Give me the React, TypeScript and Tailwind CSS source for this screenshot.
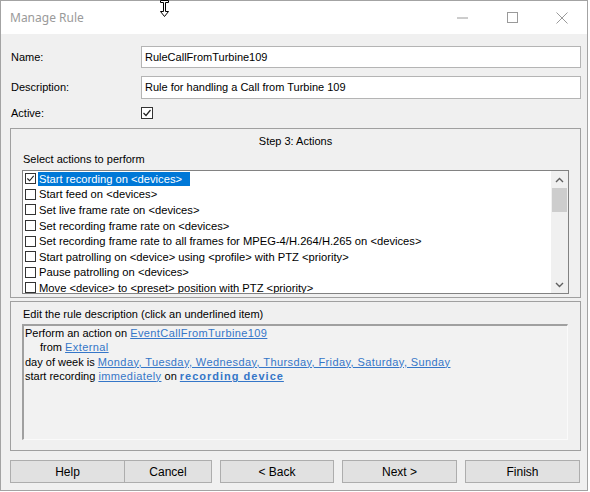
import React from "react";

const font = { fontFamily: '"Liberation Sans", Arial, sans-serif' };

const actions = [
  "Start recording on <devices>",
  "Start feed on <devices>",
  "Set live frame rate on <devices>",
  "Set recording frame rate on <devices>",
  "Set recording frame rate to all frames for MPEG-4/H.264/H.265 on <devices>",
  "Start patrolling on <device> using <profile> with PTZ <priority>",
  "Pause patrolling on <devices>",
  "Move <device> to <preset> position with PTZ <priority>",
];

function Check({ size = 11, checked = false }: { size?: number; checked?: boolean }) {
  return (
    <span
      className="flex shrink-0 items-center justify-center border border-[#333] bg-white"
      style={{ width: size, height: size }}
    >
      {checked && (
        <svg width={size - 2} height={size - 2} viewBox="0 0 10 10">
          <polyline points="1.5,5 4,7.5 8.5,2" fill="none" stroke="#222" strokeWidth="1.2" />
        </svg>
      )}
    </span>
  );
}

function Chevron({ up }: { up?: boolean }) {
  return (
    <svg width="9" height="6" viewBox="0 0 9 6">
      <polyline
        points={up ? "1,5 4.5,1.5 8,5" : "1,1 4.5,4.5 8,1"}
        fill="none"
        stroke="#606060"
        strokeWidth="1.4"
      />
    </svg>
  );
}

function Link({ children, bold }: { children: React.ReactNode; bold?: boolean }) {
  return (
    <span
      className={`text-[#3576c8] underline ${
        bold ? "font-bold tracking-[1px]" : "tracking-[0.4px]"
      }`}
    >
      {children}
    </span>
  );
}

function Button({ label, w, className = "" }: { label: string; w: string; className?: string }) {
  return (
    <button
      className={`h-[23px] ${w} border border-[#adadad] bg-[#e1e1e1] text-[12px] text-black ${className}`}
    >
      {label}
    </button>
  );
}

export default function App() {
  return (
    <div className="relative h-[492px] w-[590px] overflow-hidden bg-white" style={font}>
      <div className="flex h-[491px] w-[588px] flex-col border border-[#a3a3a3]">
        {/* title bar */}
        <div className="flex h-[33px] shrink-0 items-center bg-white">
          <span
            className="pl-[9px] text-[12px] text-[#9a9a9a]"
            style={{ fontFamily: '"Noto Sans", "Open Sans", sans-serif' }}
          >
            Manage Rule
          </span>
          <div className="ml-auto flex h-full">
            <div className="flex w-[50px] items-center justify-center">
              <svg width="11" height="2" viewBox="0 0 11 2">
                <line x1="0" y1="1" x2="11" y2="1" stroke="#9a9a9a" strokeWidth="1" />
              </svg>
            </div>
            <div className="flex w-[50px] items-center justify-center">
              <svg width="11" height="11" viewBox="0 0 11 11">
                <rect x="0.5" y="0.5" width="10" height="10" fill="none" stroke="#9a9a9a" />
              </svg>
            </div>
            <div className="flex w-[50px] items-center justify-center">
              <svg width="12" height="12" viewBox="0 0 12 12">
                <path d="M0.5 0.5 L11.5 11.5 M11.5 0.5 L0.5 11.5" stroke="#9a9a9a" strokeWidth="1" />
              </svg>
            </div>
          </div>
        </div>

        {/* body */}
        <div className="flex flex-1 flex-col bg-[#f0f0f0] pl-[9px] pr-[6px] text-[11px] text-black">
          <div className="mt-[12px] flex h-[22px] items-center">
            <span className="w-[131px] pl-px">Name:</span>
            <div className="flex h-full flex-1 items-center border border-[#b4b4b4] bg-white pl-[3px]">
              RuleCallFromTurbine109
            </div>
          </div>
          <div className="mt-[8px] flex h-[23px] items-center">
            <span className="w-[131px] pl-px">Description:</span>
            <div className="flex h-full flex-1 items-center border border-[#b4b4b4] bg-white pl-[3px]">
              Rule for handling a Call from Turbine 109
            </div>
          </div>
          <div className="mt-[8px] flex h-[12px] items-center">
            <span className="w-[131px] pl-px">Active:</span>
            <Check size={12} checked />
          </div>

          {/* step 3 group */}
          <div className="mt-[9px] flex h-[170px] flex-col border border-[#a0a0a0]">
            <div className="pt-[5px] text-center leading-[14px]">Step 3: Actions</div>
            <div className="mt-[4px] pl-[12px] leading-[14px]">Select actions to perform</div>
            <div className="mx-[11px] mt-[4px] flex h-[124px] border border-[#828282] bg-white">
              <div className="flex-1 overflow-hidden pl-px text-[11.2px]">
                {actions.map((a, i) => (
                  <div key={i} className="flex h-[15.6px] items-center whitespace-nowrap">
                    <span className="ml-px">
                      <Check checked={i === 0} />
                    </span>
                    <span
                      className={`ml-[2px] px-px leading-[14px] ${
                        i === 0 ? "bg-[#0078d7] pr-[8px] text-white" : ""
                      }`}
                    >
                      {a}
                    </span>
                  </div>
                ))}
              </div>
              <div className="flex w-[17px] shrink-0 flex-col bg-[#f0f0f0]">
                <div className="flex h-[17px] items-center justify-center">
                  <Chevron up />
                </div>
                <div className="mx-px h-[24px] bg-[#cdcdcd]" />
                <div className="flex-1" />
                <div className="flex h-[17px] items-center justify-center">
                  <Chevron />
                </div>
              </div>
            </div>
          </div>

          {/* description group */}
          <div className="mt-[3px] flex h-[150px] flex-col border border-[#a0a0a0]">
            <div className="pl-[12px] pt-[5px] leading-[14px]">
              Edit the rule description (click an underlined item)
            </div>
            <div className="ml-[11px] mr-[12px] mt-[3px] h-[116px] border-b border-l-2 border-r border-t-2 border-b-[#fafafa] border-l-[#a0a0a0] border-r-[#fafafa] border-t-[#a0a0a0] bg-[#f2f2f2] leading-[14.3px]">
              <div className="pl-px">
                Perform an action on <Link>EventCallFromTurbine109</Link>
              </div>
              <div className="pl-[16px]">
                from <Link>External</Link>
              </div>
              <div className="pl-px">
                day of week is{" "}
                <Link>Monday, Tuesday, Wednesday, Thursday, Friday, Saturday, Sunday</Link>
              </div>
              <div className="pl-px">
                start recording <Link>immediately</Link> on <Link bold>recording device</Link>
              </div>
            </div>
          </div>

          {/* buttons */}
          <div className="mt-[9px] flex">
            <Button label="Help" w="w-[115px]" />
            <Button label="Cancel" w="w-[88px]" className="-ml-px" />
            <Button label="< Back" w="w-[114px]" className="ml-[8px]" />
            <Button label="Next >" w="w-[115px]" className="ml-[8px]" />
            <Button label="Finish" w="w-[115px]" className="ml-[8px]" />
          </div>
        </div>
      </div>

      {/* mouse cursor over the top edge */}
      <svg className="absolute left-[159px] top-0" width="11" height="18" viewBox="0 0 11 18">
        <polygon
          points="1.5,0.5 9.5,0.5 9.5,2.5 6.5,2.5 6.5,11.5 9.5,11.5 5.5,16.5 1.5,11.5 4.5,11.5 4.5,2.5 1.5,2.5"
          fill="white"
          stroke="black"
          strokeWidth="1"
        />
      </svg>
    </div>
  );
}
